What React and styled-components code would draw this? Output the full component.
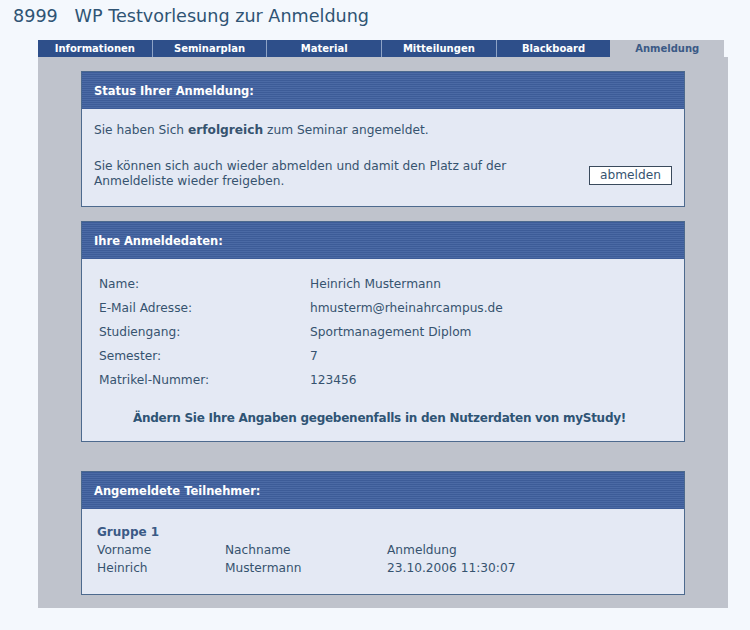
import React from 'react';
import styled, { createGlobalStyle } from 'styled-components';

const GlobalStyles = createGlobalStyle`
    html, body {
        margin: 0;
        padding: 0;
        background: #f4f8fd;
    }
    body {
        font-family: "DejaVu Sans", Verdana, sans-serif;
        color: #36536f;
    }
`;

const Page = styled.div`
    width: 750px;
    min-height: 630px;
`;

const Title = styled.h1`
    margin: 0;
    padding: 6px 0 0 13px;
    height: 34px;
    box-sizing: border-box;
    font-weight: normal;
    font-size: 17.6px;
    line-height: 20px;
    color: #2f5474;
    white-space: pre;
`;

const Nav = styled.ul`
    display: flex;
    margin: 6px 0 0 38px;
    padding: 0;
    list-style: none;
    width: 686px;
    height: 17px;
    background: #2e4f8a;
`;

const Tab = styled.li`
    flex: 1;
    display: flex;
    align-items: center;
    justify-content: center;
    font-size: 10px;
    font-weight: bold;
    color: ${({ active }) => (active ? '#3b5a86' : '#ffffff')};
    background: ${({ active }) => (active ? '#bfc3cc' : 'transparent')};
    border-left: ${({ first, active }) => (first || active ? 'none' : '1px solid #8ea3c6')};
`;

const Panel = styled.div`
    margin-left: 38px;
    width: 690px;
    box-sizing: border-box;
    padding: 14px 43px 13px 43px;
    background: #bfc3cc;
    display: flex;
    flex-direction: column;
`;

const Box = styled.section`
    border: 1px solid #4d6a8e;
    background: #e4e9f4;
    margin-top: ${({ gap }) => gap || 0}px;
`;

const BoxHead = styled.h2`
    margin: 0;
    height: 37px;
    display: flex;
    align-items: center;
    padding-left: 12px;
    font-size: 11.5px;
    font-weight: bold;
    color: #ffffff;
    background: repeating-linear-gradient(
        to bottom,
        #3d5c98 0px,
        #3d5c98 1px,
        #4b6aa5 1px,
        #4b6aa5 2px
    );
`;

const BoxBody = styled.div`
    padding: ${({ pad }) => pad};
    font-size: 12.2px;
    line-height: 15px;
`;

const Text = styled.p`
    margin: 0;
`;

const Strong = styled.b`
    font-weight: bold;
`;

const Row = styled.div`
    display: flex;
    align-items: center;
    justify-content: space-between;
    margin-top: 21px;
`;

const Button = styled.button`
    font-family: "DejaVu Sans", Verdana, sans-serif;
    font-size: 12.2px;
    color: #36536f;
    background: #ffffff;
    border: 1px solid #3a4a5c;
    padding: 0;
    width: 83px;
    height: 19px;
    margin-top: 2px;
`;

const DataGrid = styled.dl`
    display: grid;
    grid-template-columns: 211px 1fr;
    grid-auto-rows: 24px;
    align-items: center;
    margin: 0;
`;

const Label = styled.dt`
    margin: 0;
`;

const Value = styled.dd`
    margin: 0;
`;

const Note = styled.p`
    margin: 19px 0 0;
    padding-right: 12px;
    text-align: center;
    font-weight: bold;
    font-size: 12px;
    color: #2f5474;
    letter-spacing: -0.25px;
`;

const Group = styled.h3`
    margin: 0;
    font-size: 12px;
    line-height: 18px;
    font-weight: bold;
    color: #3b5a86;
`;

const Participants = styled.div`
    display: grid;
    grid-template-columns: 128px 162px 1fr;
    grid-auto-rows: 18px;
    align-items: center;
`;

const tabs = ['Informationen', 'Seminarplan', 'Material', 'Mitteilungen', 'Blackboard', 'Anmeldung'];

const data = [
    ['Name:', 'Heinrich Mustermann'],
    ['E-Mail Adresse:', 'hmusterm@rheinahrcampus.de'],
    ['Studiengang:', 'Sportmanagement Diplom'],
    ['Semester:', '7'],
    ['Matrikel-Nummer:', '123456'],
];

export default function App() {
    return (
        <Page>
            <GlobalStyles />
            <Title>{'8999   WP Testvorlesung zur Anmeldung'}</Title>
            <Nav>
                {tabs.map((t, i) => (
                    <Tab key={t} first={i === 0} active={t === 'Anmeldung'}>{t}</Tab>
                ))}
            </Nav>
            <Panel>
                <Box>
                    <BoxHead>Status Ihrer Anmeldung:</BoxHead>
                    <BoxBody pad="14px 12px 17px 12px">
                        <Text>Sie haben Sich <Strong>erfolgreich</Strong> zum Seminar angemeldet.</Text>
                        <Row>
                            <Text>
                                Sie können sich auch wieder abmelden und damit den Platz auf der<br />
                                Anmeldeliste wieder freigeben.
                            </Text>
                            <Button>abmelden</Button>
                        </Row>
                    </BoxBody>
                </Box>
                <Box gap={14}>
                    <BoxHead>Ihre Anmeldedaten:</BoxHead>
                    <BoxBody pad="13px 12px 15px 17px">
                        <DataGrid>
                            {data.map(([l, v]) => (
                                <React.Fragment key={l}>
                                    <Label>{l}</Label>
                                    <Value>{v}</Value>
                                </React.Fragment>
                            ))}
                        </DataGrid>
                        <Note>Ändern Sie Ihre Angaben gegebenenfalls in den Nutzerdaten von myStudy!</Note>
                    </BoxBody>
                </Box>
                <Box gap={29}>
                    <BoxHead>Angemeldete Teilnehmer:</BoxHead>
                    <BoxBody pad="14px 12px 17px 15px">
                        <Group>Gruppe 1</Group>
                        <Participants>
                            <span>Vorname</span>
                            <span>Nachname</span>
                            <span>Anmeldung</span>
                            <span>Heinrich</span>
                            <span>Mustermann</span>
                            <span>23.10.2006 11:30:07</span>
                        </Participants>
                    </BoxBody>
                </Box>
            </Panel>
        </Page>
    );
}
